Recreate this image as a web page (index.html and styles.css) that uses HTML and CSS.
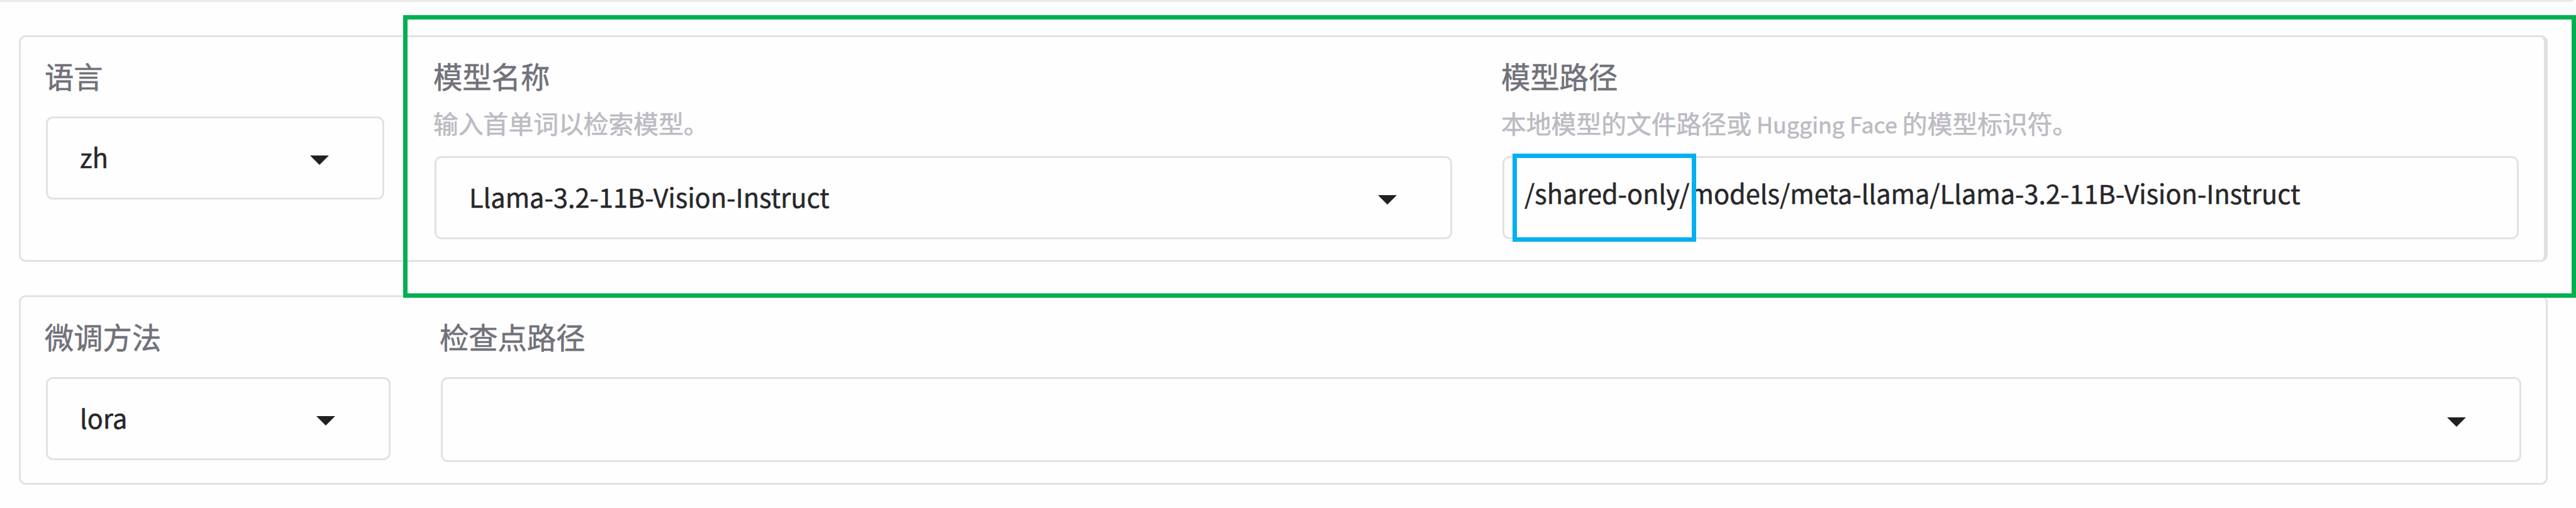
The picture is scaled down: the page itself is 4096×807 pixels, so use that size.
FILE: index.html
```html
<!DOCTYPE html>
<html lang="zh-CN">
<head>
<meta charset="utf-8">
<title>模型设置</title>
<link rel="stylesheet" href="styles.css">
</head>
<body>
<div class="divider"></div>
<main class="form">
  <section class="panel panel-model">
    <div class="field">
      <div class="label">语言</div>
      <div class="control"><span class="value">zh</span><svg class="caret" viewBox="0 0 30 15"><path d="M0 0H30L15 15Z"/></svg></div>
    </div>
    <div class="field">
      <div class="label">模型名称</div>
      <div class="info">输入首单词以检索模型。</div>
      <div class="control"><span class="value">Llama-3.2-11B-Vision-Instruct</span><svg class="caret" viewBox="0 0 30 15"><path d="M0 0H30L15 15Z"/></svg></div>
    </div>
    <div class="field">
      <div class="label">模型路径</div>
      <div class="info">本地模型的文件路径或<span class="latin"> Hugging Face </span>的模型标识符。</div>
      <div class="control control-text"><span class="value">/shared-only/models/meta-llama/Llama-3.2-11B-Vision-Instruct</span><div class="mark-path"></div></div>
    </div>
  </section>
  <section class="panel panel-tuning">
    <div class="field">
      <div class="label">微调方法</div>
      <div class="control"><span class="value">lora</span><svg class="caret" viewBox="0 0 30 15"><path d="M0 0H30L15 15Z"/></svg></div>
    </div>
    <div class="field">
      <div class="label">检查点路径</div>
      <div class="control control-checkpoint"><span class="value"></span><svg class="caret" viewBox="0 0 30 15"><path d="M0 0H30L15 15Z"/></svg></div>
    </div>
  </section>
</main>
<div class="mark-model"></div>
</body>
</html>
```
FILE: styles.css
```css
* { box-sizing: border-box; }
body {
  margin: 0;
  width: 4096px;
  height: 807px;
  overflow: hidden;
  position: relative;
  background: #fefefe;
  font-family: "Noto Sans CJK SC", sans-serif;
}
.divider { width: 4091px; height: 3px; background: #e9e9e9; }
.form {
  display: flex;
  flex-direction: column;
  gap: 53px;
  padding: 53px 45px 0 30px;
}
.panel {
  display: grid;
  align-items: start;
  gap: 80px;
  border: 3px solid #e2e2e5;
  border-radius: 11px;
}
.panel-model {
  grid-template-columns: 538px 1618px 1616px;
  height: 360px;
  padding: 31px 40px 0;
  border-right: 6px solid #e0e0e3;
}
.panel-tuning {
  grid-template-columns: 548px 3308px;
  height: 301px;
  padding: 32px 39px 0 40px;
}
.field { display: flex; flex-direction: column; }
.label {
  height: 62px;
  margin-left: -2px;
  line-height: 60px;
  font-size: 46.3px;
  color: #71717a;
  -webkit-text-stroke: 0.6px #71717a;
  white-space: nowrap;
}
.info {
  height: 70px;
  margin-left: -2px;
  padding-top: 16px;
  line-height: 54px;
  font-size: 39.8px;
  color: #bbbbc2;
  -webkit-text-stroke: 0.6px #bbbbc2;
  white-space: nowrap;
}
.latin { font-size: 35.8px; }
.control {
  position: relative;
  display: flex;
  align-items: center;
  justify-content: space-between;
  height: 132px;
  margin-top: 33px;
  padding: 0 85px 0 51px;
  border: 3px solid #e2e2e5;
  border-radius: 11px;
}
.info + .control { margin-top: 26px; padding-left: 52px; }
.control-checkpoint { height: 135px; }
.info + .control-text { padding-left: 32px; }
.value {
  margin-top: -4px;
  font-size: 41.5px;
  line-height: 60px;
  color: #27272a;
  -webkit-text-stroke: 0.5px #27272a;
  white-space: nowrap;
}
.control-text .value { margin-top: -16px; }
.caret { width: 30px; height: 15px; margin-top: 7px; fill: #202023; }
.mark-path {
  position: absolute;
  left: 13px;
  top: -7px;
  width: 292px;
  height: 140px;
  border: 7px solid #00b0f0;
}
.mark-model {
  position: absolute;
  left: 641px;
  top: 24px;
  width: 3455px;
  height: 449px;
  border: 7px solid #00b050;
}
```
